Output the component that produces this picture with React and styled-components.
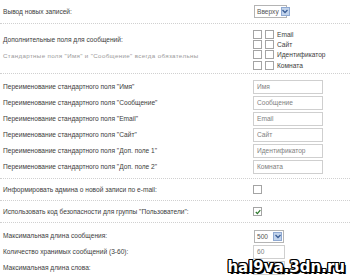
import React from 'react'
import styled, { createGlobalStyle } from 'styled-components'

const Global = createGlobalStyle`
  * { box-sizing: border-box; }
  body {
    margin: 0;
    background: #fff;
    font-family: "Liberation Sans", Arial, sans-serif;
  }
`

const Page = styled.div`
  position: relative;
  width: 350px;
  height: 279px;
  overflow: hidden;
  background: #fff;
  color: #3c3c3c;
  font-size: 6.6px;
`

const Row = styled.div`
  display: grid;
  grid-template-columns: 253px 1fr;
  align-items: ${p => p.top ? 'start' : 'center'};
  padding: ${p => p.pad || '0'};
  height: ${p => p.h || 16}px;
  border-bottom: ${p => p.sep ? '1px dotted #d0d0d0' : 'none'};
`

const Block = styled.div`
  padding: ${p => p.pad};
  border-bottom: ${p => p.sep ? '1px dotted #d0d0d0' : 'none'};
`

const Label = styled.div`
  padding-left: 3px;
  padding-top: ${p => p.offset || 0}px;
  line-height: 10px;
  white-space: nowrap;
`

const Hint = styled.div`
  color: #9a9a9a;
  font-size: 6.2px;
  letter-spacing: 0.35px;
  margin-top: 6px;
`

const Field = styled.div`
  display: flex;
  flex-direction: column;
`

const Input = styled.div`
  height: 14px;
  border: 1px solid #cfcfcf;
  color: #808080;
  padding-left: 3px;
  line-height: 12px;
  width: ${p => p.w || 70}px;
`

const Select = styled.div`
  display: inline-flex;
  align-items: center;
  justify-content: space-between;
  gap: 2px;
  border: 1px solid #b4b4b4;
  height: 13px;
  padding-left: 2px;
  margin-left: 1px;
  color: #555;
  line-height: 11px;
  width: ${p => p.w}px;
`

const Arrow = styled.span`
  flex-shrink: 0;
  width: 9px;
  height: 9px;
  margin-right: 1px;
  background: #c2d4ec;
  border: 1px solid #8fa9d2;
  display: flex;
  align-items: center;
  justify-content: center;
`

const Box = styled.span`
  width: 9px;
  height: 9px;
  border: 1px solid #a4a4a4;
  background: #fff;
  display: inline-flex;
  align-items: center;
  justify-content: center;
`

const CheckLine = styled.div`
  display: flex;
  align-items: center;
  gap: 3px;
  height: 10.3px;
`

const Watermark = styled.div`
  position: absolute;
  right: 5px;
  bottom: 3px;
  font-family: "DejaVu Sans", sans-serif;
  font-weight: bold;
  font-size: 15px;
  color: #fff;
  text-shadow: -1px -1px 0 #000, 1px -1px 0 #000, -1px 1px 0 #000, 1px 1px 0 #000,
    0 1px 0 #000, 0 -1px 0 #000, 1px 0 0 #000, -1px 0 0 #000, 2px 2px 0 #000;
`

function Chevron() {
  return (
    <svg width="6" height="5" viewBox="0 0 6 5">
      <path d="M0.5 1 L3 3.5 L5.5 1" stroke="#3b5d95" strokeWidth="1.3" fill="none" />
    </svg>
  )
}

function Tick() {
  return (
    <svg width="6" height="6" viewBox="0 0 6 6">
      <path d="M0.8 3 L2.4 4.6 L5.3 1.2" stroke="#2f7a2f" strokeWidth="1.3" fill="none" />
    </svg>
  )
}

const renames = [
  ['Имя', 'Имя'],
  ['Сообщение', 'Сообщение'],
  ['Email', 'Email'],
  ['Сайт', 'Сайт'],
  ['Доп. поле 1', 'Идентификатор'],
  ['Доп. поле 2', 'Комната'],
]

const extras = ['Email', 'Сайт', 'Идентификатор', 'Комната']

export default function App() {
  return (
    <Page>
      <Global />
      <Row sep h={24}>
        <Label>Вывод новых записей:</Label>
        <Select w={33}>Вверху<Arrow><Chevron /></Arrow></Select>
      </Row>
      <Row sep top pad="5px 0 0" h={50}>
        <Label offset={6}>
          Дополнительные поля для сообщений:
          <Hint>Стандартные поля "Имя" и "Сообщение" всегда обязательны</Hint>
        </Label>
        <Field>
          {extras.map(e => (
            <CheckLine key={e}><Box /><Box />{e}</CheckLine>
          ))}
        </Field>
      </Row>
      <Block sep pad="5px 0 3px">
        {renames.map(([n, v]) => (
          <Row key={n} h={16}>
            <Label>Переименование стандартного поля "{n}"</Label>
            <Input>{v}</Input>
          </Row>
        ))}
      </Block>
      <Row sep h={22}>
        <Label>Информировать админа о новой записи по e-mail:</Label>
        <Box />
      </Row>
      <Row sep h={22}>
        <Label>Использовать код безопасности для группы "Пользователи":</Label>
        <Box><Tick /></Box>
      </Row>
      <Block pad="5px 0 0">
        <Row h={16}>
          <Label>Максимальная длина сообщения:</Label>
          <Select w={30}>500<Arrow><Chevron /></Arrow></Select>
        </Row>
        <Row h={16}>
          <Label>Количество хранимых сообщений (3-60):</Label>
          <Input w={32}>60</Input>
        </Row>
        <Row h={16}>
          <Label>Максимальная длина слова:</Label>
          <Input w={32}>100</Input>
        </Row>
      </Block>
      <Watermark>hal9va.3dn.ru</Watermark>
    </Page>
  )
}
